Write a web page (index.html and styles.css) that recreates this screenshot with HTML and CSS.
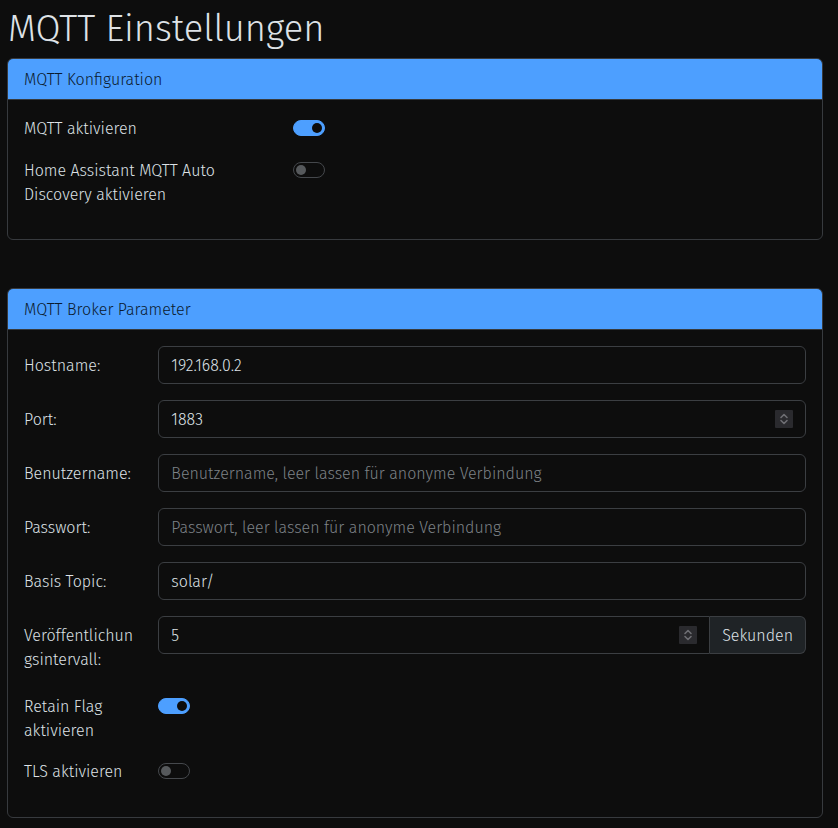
FILE: index.html
```html
<!DOCTYPE html>
<html lang="de">
<head>
<meta charset="utf-8">
<title>MQTT Einstellungen</title>
<link rel="stylesheet" href="styles.css">
</head>
<body>
<main class="page">
  <h1 class="title">MQTT Einstellungen</h1>

  <section class="card">
    <div class="card-header">MQTT Konfiguration</div>
    <div class="card-body">
      <div class="row row-4">
        <div class="label plain">MQTT aktivieren</div>
        <div class="field"><span class="switch on"></span></div>
      </div>
      <div class="row row-4">
        <div class="label plain">Home Assistant MQTT Auto Discovery aktivieren</div>
        <div class="field"><span class="switch"></span></div>
      </div>
    </div>
  </section>

  <section class="card card-second">
    <div class="card-header">MQTT Broker Parameter</div>
    <div class="card-body">
      <div class="row row-2">
        <label class="label">Hostname:</label>
        <div class="field"><div class="control"><input class="inp" type="text" value="192.168.0.2"></div></div>
      </div>
      <div class="row row-2">
        <label class="label">Port:</label>
        <div class="field">
          <div class="control"><input class="inp" type="text" value="1883"><span class="spin"><svg width="18" height="18" viewBox="0 0 18 18"><path d="M6 7.5 L9 4.5 L12 7.5" fill="none" stroke="#6e6e73" stroke-width="1.6" stroke-linecap="round" stroke-linejoin="round"/><path d="M6 10.5 L9 13.5 L12 10.5" fill="none" stroke="#6e6e73" stroke-width="1.6" stroke-linecap="round" stroke-linejoin="round"/></svg></span></div>
        </div>
      </div>
      <div class="row row-2">
        <label class="label">Benutzername:</label>
        <div class="field"><div class="control"><input class="inp" type="text" placeholder="Benutzername, leer lassen für anonyme Verbindung"></div></div>
      </div>
      <div class="row row-2">
        <label class="label">Passwort:</label>
        <div class="field"><div class="control"><input class="inp" type="text" placeholder="Passwort, leer lassen für anonyme Verbindung"></div></div>
      </div>
      <div class="row row-2">
        <label class="label">Basis Topic:</label>
        <div class="field"><div class="control"><input class="inp" type="text" value="solar/"></div></div>
      </div>
      <div class="row row-2">
        <label class="label">Veröffentlichungsintervall:</label>
        <div class="field">
          <div class="group">
            <div class="control grouped"><input class="inp" type="text" value="5"><span class="spin"><svg width="18" height="18" viewBox="0 0 18 18"><path d="M6 7.5 L9 4.5 L12 7.5" fill="none" stroke="#6e6e73" stroke-width="1.6" stroke-linecap="round" stroke-linejoin="round"/><path d="M6 10.5 L9 13.5 L12 10.5" fill="none" stroke="#6e6e73" stroke-width="1.6" stroke-linecap="round" stroke-linejoin="round"/></svg></span></div>
            <span class="addon">Sekunden</span>
          </div>
        </div>
      </div>
      <div class="row row-2">
        <div class="label plain">Retain Flag aktivieren</div>
        <div class="field"><span class="switch on"></span></div>
      </div>
      <div class="row row-2">
        <div class="label plain">TLS aktivieren</div>
        <div class="field"><span class="switch"></span></div>
      </div>
    </div>
  </section>
</main>
</body>
</html>
```
FILE: styles.css
```css
* { box-sizing: border-box; }
html, body { margin: 0; padding: 0; }
body {
  background: #0d0d0d;
  color: #dee2e6;
  font-family: "Fira Sans", "Open Sans", "Noto Sans", sans-serif;
  font-weight: 300;
  font-size: 16px;
  line-height: 1.5;
}
.page {
  padding: 8px 15px 12px 7px;
}
.title {
  font-size: 36.3px;
  font-weight: 300;
  line-height: 42px;
  margin: 0 0 8px 1px;
  color: #dee2e6;
}
.card {
  border: 1px solid #373a3e;
  border-radius: 6px;
  overflow: hidden;
}
.card-second { margin-top: 48px; }
.card-header {
  background: #4d9fff;
  color: #0b1a2e;
  padding: 9px 16px 7px;
  line-height: 24px;
  border-bottom: 1px solid #373a3e;
}
.card-body {
  padding: 16px;
}
.row {
  display: grid;
  column-gap: 24px;
  margin-bottom: 16px;
  align-items: start;
}
.row-4 { grid-template-columns: calc((100% + 24px) / 3 - 24px) 1fr; }
.row-2 { grid-template-columns: calc((100% + 24px) / 6 - 24px) 1fr; }
.label {
  padding: 8px 0 6px;
  line-height: 24px;
  overflow-wrap: anywhere;
}
.label.plain { padding: 1px 0 0; }
.field { min-width: 0; }
.control {
  display: flex;
  align-items: center;
  height: 38px;
  border: 1px solid #3b3e42;
  border-radius: 6px;
  padding: 0 12px;
  background: #0d0d0d;
}
.inp {
  flex: 1;
  min-width: 0;
  border: 0;
  outline: 0;
  background: transparent;
  color: #dee2e6;
  font: inherit;
  padding: 1px 0 0;
  line-height: 24px;
}
.inp::placeholder { color: #7d8287; opacity: 1; }
.spin {
  width: 18px;
  height: 18px;
  background: #2a2a2e;
  border-radius: 1px;
  display: flex;
}
.group { display: flex; }
.group .grouped {
  flex: 1;
  border-top-right-radius: 0;
  border-bottom-right-radius: 0;
}
.addon {
  display: flex;
  align-items: center;
  height: 38px;
  padding: 1px 12px 0;
  background: #1f2326;
  border: 1px solid #3b3e42;
  border-left: 0;
  border-radius: 0 6px 6px 0;
  color: #dee2e6;
}
.switch {
  display: block;
  width: 32px;
  height: 16px;
  margin-top: 4px;
  margin-bottom: 6px;
  border-radius: 8px;
  border: 1px solid #45484c;
  position: relative;
  background: #0d0d0d;
}
.switch::after {
  content: "";
  position: absolute;
  top: 2px;
  left: 2px;
  width: 10px;
  height: 10px;
  border-radius: 50%;
  background: #56595c;
}
.switch.on {
  background: #4d9fff;
  border-color: #4d9fff;
}
.switch.on::after {
  left: auto;
  right: 2px;
  background: #0d0d0d;
}
```
